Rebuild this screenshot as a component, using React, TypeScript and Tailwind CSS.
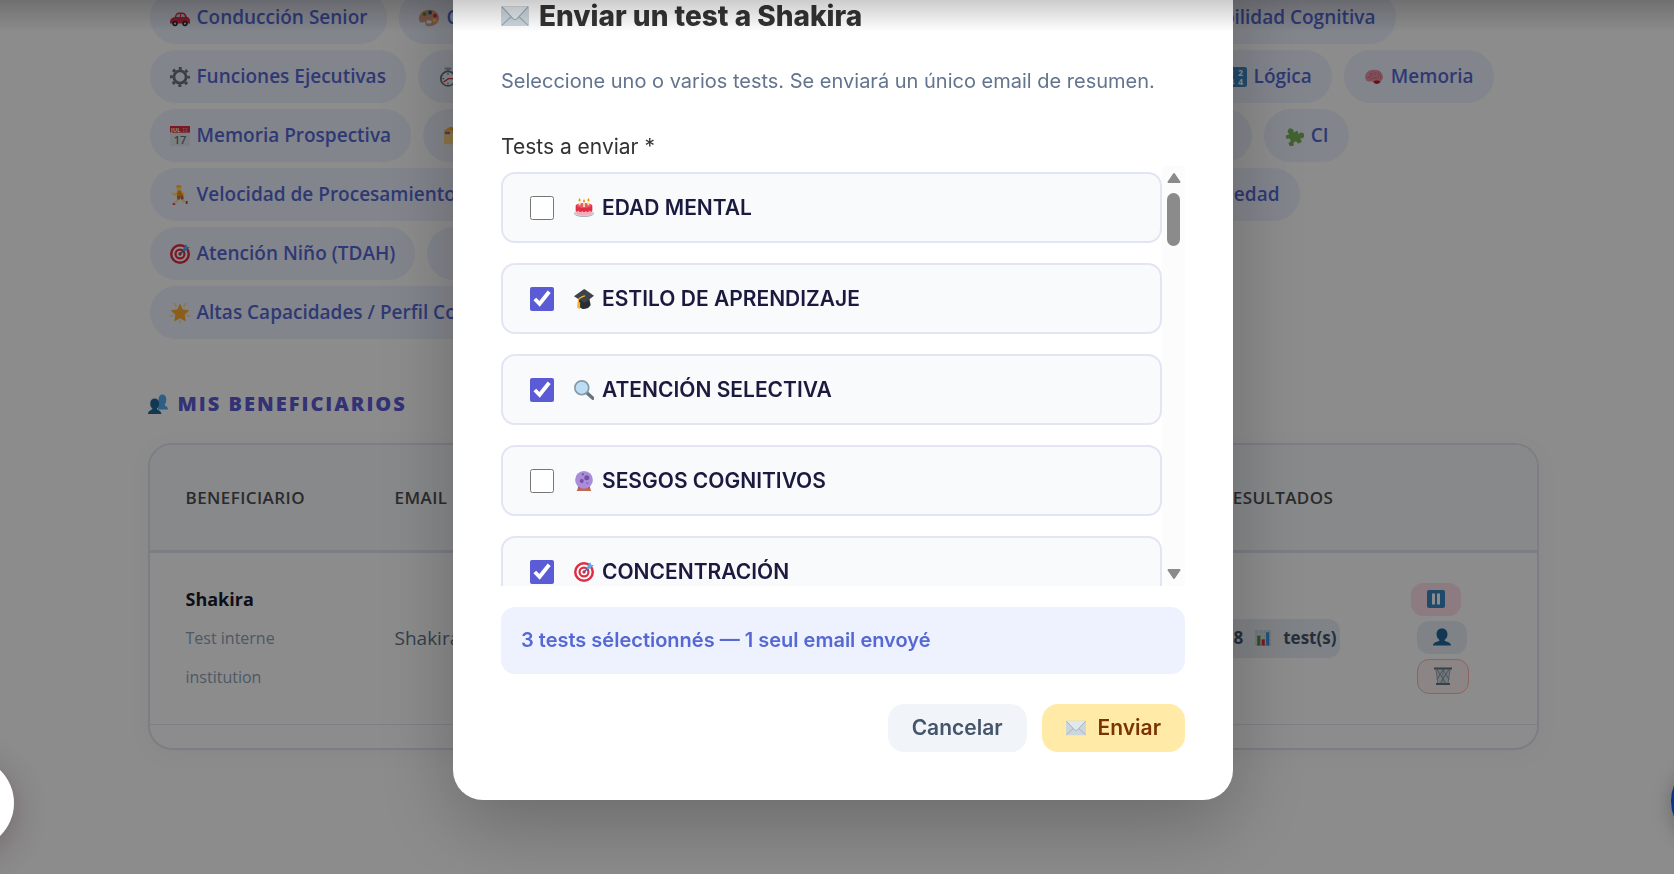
import React, { useState } from "react";

type IconName =
  | "car" | "palette" | "gear" | "stopwatch" | "calendar" | "folder" | "runner" | "target"
  | "star" | "people" | "numbers" | "brain" | "puzzle" | "cake" | "cap" | "magnifier"
  | "crystal" | "envelope" | "pause" | "person" | "trash" | "chart";

const drawings: Record<IconName, React.ReactNode> = {
  car: (
    <>
      <path d="M8 17c2-6 4-9 8-9h7c4 0 6 4 8 9z" fill="#dd2e44" />
      <path d="M11 16c1-3 2-5 5-5h2v5zM20 11h3c2 0 3 2 4 5h-7z" fill="#bbddf5" />
      <path d="M0 24c0-5 4-7 9-8h22c3 1 5 3 5 7v5H0z" fill="#dd2e44" />
      <circle cx="9" cy="28" r="5" fill="#292f33" />
      <circle cx="27" cy="28" r="5" fill="#292f33" />
      <circle cx="9" cy="28" r="2" fill="#ccd6dd" />
      <circle cx="27" cy="28" r="2" fill="#ccd6dd" />
    </>
  ),
  palette: (
    <>
      <path d="M18 3C8 3 0 10 0 19c0 4 1 7 4 7 3 1 5-2 7 0 2 3-1 7 6 7 11 0 19-6 19-15S28 3 18 3zm0 25c-3 0-5-1-5-3s2-3 5-3 5 1 5 3-2 3-5 3z" fill="#d99e82" fillRule="evenodd" />
      <circle cx="10" cy="11" r="3.500" fill="#5c913b" />
      <circle cx="20" cy="8" r="3.500" fill="#226699" />
      <circle cx="29" cy="14" r="3.500" fill="#dd2e44" />
      <circle cx="28" cy="22" r="3.500" fill="#ffcc4d" />
    </>
  ),
  gear: (
    <>
      <circle cx="18" cy="18" r="11" fill="none" stroke="#66757f" strokeWidth="5" />
      <circle cx="18" cy="18" r="15.500" fill="none" stroke="#66757f" strokeWidth="5" strokeDasharray="5.500 6.670" strokeDashoffset="2.700" />
    </>
  ),
  stopwatch: (
    <>
      <path d="M12 1h12v4h-4v4h-4V5h-4zM28 6l4 4-3 3-4-4z" fill="#99aab5" />
      <circle cx="18" cy="21" r="13" fill="#f5f8fa" stroke="#66757f" strokeWidth="3" />
      <path d="M18 11v3M18 28v3M8 21h3M25 21h3" stroke="#66757f" strokeWidth="2" />
      <path d="M10 27l9-6h7" stroke="#dd2e44" strokeWidth="2.500" fill="none" />
    </>
  ),
  calendar: (
    <>
      <rect y="4" width="36" height="32" rx="3" fill="#e1e8ed" />
      <path d="M0 0h36v12H0z" fill="#dd2e44" />
      <text x="2" y="10" fontSize="10" fontWeight="700" fill="#fff" fontFamily="Open Sans, sans-serif">JUL</text>
      <path d="M23 4h3v2h-3zM28 4h3v2h-3zM23 8h3v2h-3zM28 8h3v2h-3z" fill="#f4abba" />
      <text x="18" y="32" textAnchor="middle" fontSize="20" fontWeight="600" fill="#66757f" fontFamily="Open Sans, sans-serif">17</text>
    </>
  ),
  folder: (
    <>
      <path d="M2 8l10-6h22v30H2z" fill="#ffac33" />
      <path d="M4 8h12v4h18v21H2V10z" fill="#ffd983" />
      <path d="M17 4h10v3H17z" fill="#5c913b" />
      <rect x="3" y="10" width="10" height="5" rx="2" fill="#9266cc" />
    </>
  ),
  runner: (
    <>
      <circle cx="16" cy="5" r="4.500" fill="#ffdc5d" />
      <path d="M11 4c0-5 9-5 10 0l-5-1z" fill="#ffac33" />
      <path d="M13 10h8l4 12-8 2-5-3z" fill="#f4900c" />
      <path d="M13 12l-4 6-5-3M21 12l4 5" stroke="#ffdc5d" strokeWidth="3" fill="none" strokeLinecap="round" />
      <path d="M14 22l-1 6-6 6M20 22l4 8h7" stroke="#ffdc5d" strokeWidth="3" fill="none" />
      <path d="M16 20l-1 6M20 20l3 6" stroke="#c1694f" strokeWidth="5" />
      <path d="M5 33l4 3M30 29v5" stroke="#dd2e44" strokeWidth="3" />
    </>
  ),
  target: (
    <>
      <circle cx="18" cy="18" r="18" fill="#dd2e44" />
      <circle cx="18" cy="18" r="13.500" fill="#fff" />
      <circle cx="18" cy="18" r="10" fill="#dd2e44" />
      <circle cx="18" cy="18" r="6" fill="#fff" />
      <circle cx="18" cy="18" r="3" fill="#dd2e44" />
      <path d="M18 18L29 7" stroke="#269" strokeWidth="2.500" />
      <path d="M24 8l5-8 2 5 5 1-8 6-5 1z" fill="#55acee" />
    </>
  ),
  star: (
    <>
      <path d="M18 1l5 10.500 12 1.500-8.500 8.300 2 12.200L18 27.500 7.500 33.500l2-12.200L1 13l12-1.500z" fill="#ffac33" />
      <path d="M8 1l3 5M28 1l-3 5M0 24l5-1.500M36 24l-5-1.500M18 31v5" stroke="#ffd983" strokeWidth="2.500" strokeLinecap="round" />
    </>
  ),
  people: (
    <>
      <path d="M19 10c0-6 3-9 7-9s7 3 7 9c0 4-1 7-3 9 0 3 6 3 6 9H18z" fill="#55acee" />
      <path d="M4 17c0-6 4-9 8-9s8 3 8 9c0 4-1 7-4 9 0 3 8 3 8 10H0c0-7 8-7 8-10-3-2-4-5-4-9z" fill="#226699" />
    </>
  ),
  numbers: (
    <>
      <rect width="36" height="36" rx="4" fill="#3b88c3" />
      <text x="4" y="16" fontSize="16" fontWeight="700" fill="#fff" fontFamily="Open Sans, sans-serif">1</text>
      <text x="20" y="16" fontSize="16" fontWeight="700" fill="#fff" fontFamily="Open Sans, sans-serif">2</text>
      <text x="4" y="32" fontSize="16" fontWeight="700" fill="#fff" fontFamily="Open Sans, sans-serif">3</text>
      <text x="20" y="32" fontSize="16" fontWeight="700" fill="#fff" fontFamily="Open Sans, sans-serif">4</text>
    </>
  ),
  brain: (
    <>
      <path d="M3 22C0 14 6 5 17 5c10-1 17 5 17 13 0 5-3 8-7 9-7 2-9-1-14-1-5 1-9-1-10-4z" fill="#ea91a0" />
      <path d="M17 26c3-3 10-2 13 0-1 4-9 6-12 3z" fill="#be1931" />
      <path d="M7 20c2-4 5-2 7-5M10 12c3-2 6 1 5 3M18 8c3 2 0 5 4 6M26 10c-2 3 3 4 0 7M17 20c4-3 6 2 9-1M12 22c2-2 3-1 5-2M30 16c-1 3 1 4-1 6" stroke="#be5064" strokeWidth="1" fill="none" />
    </>
  ),
  puzzle: (
    <path
      transform="rotate(-22 18 18) translate(-4 -1) scale(1.15)"
      d="M7 11h7a4.500 4.500 0 1 1 6 0h7v6a4.500 4.500 0 1 1 0 6v7h-7a3.300 3.300 0 1 0-6 0H7v-7a3.300 3.300 0 1 0 0-6z"
      fill="#77b255"
    />
  ),
  cake: (
    <>
      <ellipse cx="18" cy="28" rx="18" ry="6" fill="#99aab5" />
      <ellipse cx="18" cy="27" rx="18" ry="6" fill="#ccd6dd" />
      <path d="M4 14h28v13c0 6-28 6-28 0z" fill="#f4abba" />
      <path d="M3 14c0-6 30-6 30 0v8c-1 4-4 3-5 0-1 4-6 4-7 1-1 3-5 3-6 0-1 3-6 3-7-1-1 3-5 3-5 0z" fill="#dd2e44" />
      <ellipse cx="18" cy="14" rx="13" ry="4" fill="#ea596e" />
      <path d="M10 6v7M18 8v8M26 6v7" stroke="#ffe8b6" strokeWidth="3" />
      <path d="M10 0c3 4 2 6 0 6s-3-2 0-6zM18 2c3 4 2 6 0 6s-3-2 0-6zM26 0c3 4 2 6 0 6s-3-2 0-6z" fill="#f4900c" />
    </>
  ),
  cap: (
    <>
      <path d="M9 15h18l3 14c-3 6-9 7-12 7s-7-2-10-6z" fill="#292f33" />
      <path d="M0 13L17 1c1-1 2-1 3 0l16 11-15 12c-1 1-3 1-4 0z" fill="#3e4347" />
      <path d="M20 12c-5 2-12 4-12 8v8" stroke="#ffac33" strokeWidth="2" fill="none" />
      <path d="M6 24h5v12l-5-2z" fill="#ffac33" />
    </>
  ),
  magnifier: (
    <>
      <path d="M22 22l12 11" stroke="#66757f" strokeWidth="6" strokeLinecap="round" />
      <circle cx="14" cy="14" r="12.500" fill="#bbddf5" stroke="#8899a6" strokeWidth="3" />
    </>
  ),
  crystal: (
    <>
      <path d="M8 28h20l3 8H5z" fill="#c1694f" />
      <path d="M8 28h20v3H8z" fill="#a0041e" opacity=".5" />
      <circle cx="18" cy="16" r="16" fill="#aa8dd8" />
      <circle cx="23" cy="12" r="4.500" fill="#7450a8" />
      <circle cx="14" cy="18" r="3.500" fill="#7450a8" />
      <circle cx="16" cy="6" r="2" fill="#7450a8" />
      <circle cx="24" cy="22" r="2" fill="#9266cc" />
    </>
  ),
  envelope: (
    <>
      <rect y="5" width="36" height="26" rx="2" fill="#ccd6dd" />
      <path d="M1 6h34L21 21c-2 2-4 2-6 0z" fill="#e1e8ed" />
      <path d="M1 30l12-11M35 30L23 19M1 6l14 15c2 2 4 2 6 0L35 6" stroke="#99aab5" strokeWidth="1.500" fill="none" />
    </>
  ),
  pause: (
    <>
      <rect width="36" height="36" rx="4" fill="#3b88c3" />
      <path d="M10 7h6v22h-6zM20 7h6v22h-6z" fill="#fff" />
    </>
  ),
  person: (
    <path d="M7 12C7 5 12 1 18 1s11 4 11 11c0 5-2 9-6 12 0 4 13 3 13 11H0c0-8 13-7 13-11-4-3-6-7-6-12z" fill="#226699" />
  ),
  trash: (
    <>
      <path d="M3 5h30l-4 28H7z" fill="#d5dde3" />
      <path d="M6 5l18 28M18 5l12 20M30 5L12 33M18 5L6 25" stroke="#8899a6" strokeWidth="2" />
      <path d="M4 5l4 28M32 5l-4 28M18 5v28" stroke="#8899a6" strokeWidth="1.500" />
      <path d="M0 1h36v4H0zM4 32h28v4H4z" fill="#66757f" />
    </>
  ),
  chart: (
    <>
      <rect width="36" height="36" rx="3" fill="#ccd6dd" />
      <path d="M0 9h36M0 18h36M0 27h36M9 0v36M18 0v36M27 0v36" stroke="#e1e8ed" strokeWidth="2" />
      <path d="M5 13h7v22H5z" fill="#5c913b" />
      <path d="M15 21h7v14h-7z" fill="#dd2e44" />
      <path d="M25 5h7v30h-7z" fill="#3b94d9" />
    </>
  ),
};

const Icon = ({ name, className = "size-5" }: { name: IconName; className?: string }) => (
  <svg viewBox="0 0 36 36" className={`shrink-0 ${className}`} aria-hidden>
    {drawings[name]}
  </svg>
);

interface Tag {
  icon: IconName;
  label?: string;
  grow?: boolean;
}

const tagRows: { width: string; tags: Tag[] }[] = [
  {
    width: "max-w-[1246px]",
    tags: [
      { icon: "car", label: "Conducción Senior" },
      { icon: "palette", label: "Color", grow: true },
      { icon: "brain", label: "Flexibilidad Cognitiva" },
    ],
  },
  {
    width: "max-w-[1344px]",
    tags: [
      { icon: "gear", label: "Funciones Ejecutivas" },
      { icon: "stopwatch", grow: true },
      { icon: "numbers", label: "Lógica" },
      { icon: "brain", label: "Memoria" },
    ],
  },
  {
    width: "max-w-[1199px]",
    tags: [
      { icon: "calendar", label: "Memoria Prospectiva" },
      { icon: "folder", grow: true },
      { icon: "puzzle", label: "CI" },
    ],
  },
  {
    width: "max-w-[1150px]",
    tags: [
      { icon: "runner", label: "Velocidad de Procesamiento" },
      { icon: "star", grow: true },
      { icon: "brain", label: "Ansiedad" },
    ],
  },
  {
    width: "max-w-[900px]",
    tags: [{ icon: "target", label: "Atención Niño (TDAH)" }],
  },
  {
    width: "max-w-[900px]",
    tags: [{ icon: "star", label: "Altas Capacidades / Perfil Cognitivo" }],
  },
];

const tests: { id: string; icon: IconName; label: string }[] = [
  { id: "edad", icon: "cake", label: "EDAD MENTAL" },
  { id: "estilo", icon: "cap", label: "ESTILO DE APRENDIZAJE" },
  { id: "atencion", icon: "magnifier", label: "ATENCIÓN SELECTIVA" },
  { id: "sesgos", icon: "crystal", label: "SESGOS COGNITIVOS" },
  { id: "concentracion", icon: "target", label: "CONCENTRACIÓN" },
];

const TagCloud = () => (
  <div className="flex flex-col gap-1.5 pl-0.5">
    {tagRows.map((row, i) => (
      <div key={i} className={`flex gap-3 ${row.width}`}>
        {row.tags.map((tag) => (
          <span
            key={tag.icon}
            className={`flex h-[53px] items-center gap-[7px] rounded-full bg-[#eef2ff] px-5 text-[19px] font-semibold whitespace-nowrap text-[#5568d3] ${
              tag.grow ? "flex-1" : ""
            }`}
          >
            <Icon name={tag.icon} />
            {tag.label}
          </span>
        ))}
        {row.tags.length === 1 && i === 4 && <span className="h-[53px] flex-1 rounded-full bg-[#eef2ff]" />}
      </div>
    ))}
  </div>
);

const Beneficiaries = () => (
  <section className="mt-[49px]">
    <h2 className="flex items-center gap-2.5 text-xl leading-8 font-extrabold tracking-widest text-[#5b5bd6]">
      <Icon name="people" />
      MIS BENEFICIARIOS
    </h2>
    <div className="mt-[23px] overflow-hidden rounded-3xl border-2 border-[#e2e5f0] pb-[23px] shadow-[0_4px_24px_rgba(0,0,0,0.04)]">
      <table className="w-full table-fixed border-collapse text-left">
        <thead className="border-b-3 border-[#e2e5f0] bg-slate-50 text-[17px] tracking-wide text-[#4f4f4f]">
          <tr className="h-[106px]">
            <th className="w-[209px] px-9 font-semibold">BENEFICIARIO</th>
            <th className="px-9 font-semibold">EMAIL</th>
            <th className="w-[189px] pl-9 font-semibold">RESULTADOS</th>
            <th className="w-[162px]" aria-label="Acciones" />
          </tr>
        </thead>
        <tbody>
          <tr className="border-b border-slate-200">
            <td className="py-[27px] pl-9">
              <strong className="block text-lg leading-[39px] font-bold text-[#1a1a2e]">Shakira</strong>
              <span className="block max-w-[110px] text-base leading-[39px] text-slate-400">
                Test interne institution
              </span>
            </td>
            <td className="px-9 text-[19px] text-slate-500">Shakira</td>
            <td className="pl-9">
              <span className="inline-flex h-[39px] items-center gap-3 rounded-xl bg-[#e8edf4] pr-1 pl-3 text-[17px] font-bold text-slate-600">
                8 <Icon name="chart" className="size-4" /> test(s)
              </span>
            </td>
            <td className="pl-9">
              <div className="flex flex-col items-start gap-[5px]">
                <button
                  aria-label="Pausar"
                  className="flex h-[33px] items-center rounded-xl bg-[#ffe1e9] px-4"
                >
                  <Icon name="pause" className="size-[18px]" />
                </button>
                <button
                  aria-label="Perfil"
                  className="ml-1.5 flex h-[33px] items-center rounded-xl bg-[#e8eff7] px-4"
                >
                  <Icon name="person" className="size-[18px]" />
                </button>
                <button
                  aria-label="Eliminar"
                  className="ml-1.5 flex h-[35px] items-center rounded-xl border border-[#fcb5b5] bg-red-50 px-4"
                >
                  <Icon name="trash" className="size-[18px]" />
                </button>
              </div>
            </td>
          </tr>
        </tbody>
      </table>
    </div>
  </section>
);

const Scrollbar = () => (
  <div className="flex w-[23px] flex-col items-center bg-[#fcfcfc] py-1.5" aria-hidden>
    <svg viewBox="0 0 16 12" className="h-3 w-4">
      <path d="M8 2l5.500 8h-11z" fill="#8b8b8b" stroke="#8b8b8b" strokeWidth="2" strokeLinejoin="round" />
    </svg>
    <div className="mt-[9px] h-[53px] w-[13px] rounded-full bg-[#8b8b8b]" />
    <svg viewBox="0 0 16 12" className="mt-auto h-3 w-4">
      <path d="M8 10L2.500 2h11z" fill="#8b8b8b" stroke="#8b8b8b" strokeWidth="2" strokeLinejoin="round" />
    </svg>
  </div>
);

const SendTestModal = () => {
  const [selected, setSelected] = useState(["estilo", "atencion", "concentracion"]);

  const toggle = (id: string) =>
    setSelected((prev) => (prev.includes(id) ? prev.filter((x) => x !== id) : [...prev, id]));

  return (
    <div
      role="dialog"
      aria-modal="true"
      aria-labelledby="modal-title"
      className="w-full max-w-[780px] shrink-0 rounded-[30px] bg-white p-12 font-[Inter,sans-serif] shadow-[0_24px_80px_rgba(0,0,0,0.25)]"
    >
      <h2 id="modal-title" className="flex items-center gap-2.5 text-[28px] leading-9 font-extrabold text-[#333]">
        <Icon name="envelope" className="size-7" />
        Enviar un test a Shakira
      </h2>
      <p className="mt-[30px] text-xl leading-[34px] whitespace-nowrap text-slate-500">
        Seleccione uno o varios tests. Se enviará un único email de resumen.
      </p>

      <fieldset className="mt-8">
        <legend className="text-[21px] leading-[34px] text-[#333]">Tests a enviar *</legend>
        <div className="mt-0.5 flex h-[420px] overflow-hidden">
          <div className="flex flex-1 flex-col gap-5 pt-1.5">
            {tests.map((test) => (
              <label
                key={test.id}
                className="flex h-[71px] shrink-0 items-center rounded-[14px] border-2 border-[#e4e4f7] bg-slate-50 px-[27px] text-[21px] font-semibold text-[#1a1a3e]"
              >
                <input
                  type="checkbox"
                  checked={selected.includes(test.id)}
                  onChange={() => toggle(test.id)}
                  className="mr-5 size-6 accent-[#5b5bd6]"
                />
                <Icon name={test.icon} className="mr-2 size-5" />
                {test.label}
              </label>
            ))}
          </div>
          <Scrollbar />
        </div>
      </fieldset>

      <p className="mt-[21px] rounded-[14px] bg-[#eef2ff] px-5 py-4 text-xl leading-[35px] font-semibold text-[#5568d3]">
        {selected.length} tests sélectionnés — 1 seul email envoyé
      </p>

      <div className="mt-[30px] flex justify-end gap-[15px] text-[21px] font-semibold">
        <button className="h-12 rounded-2xl bg-slate-100 px-6 text-slate-600">Cancelar</button>
        <button className="flex h-12 items-center gap-3 rounded-2xl bg-[#ffeaa7] px-6 text-amber-900">
          <Icon name="envelope" />
          Enviar
        </button>
      </div>
    </div>
  );
};

export default function App() {
  return (
    <div className="relative h-screen overflow-hidden bg-white pl-3 font-['Open_Sans',sans-serif]">
      <main className="mx-auto -mt-[9px] max-w-[1391px]">
        <TagCloud />
        <Beneficiaries />
      </main>

      <button
        aria-label="Chat"
        className="fixed -right-[85px] bottom-[29px] size-22 rounded-full bg-blue-600 shadow-[0_4px_20px_rgba(0,0,0,0.25)]"
      />

      <div className="fixed inset-0 flex items-end justify-center bg-black/45 pb-[74px] pl-3">
        <SendTestModal />
      </div>

      <button
        aria-label="Accesibilidad"
        className="fixed bottom-[25px] -left-[78px] size-[92px] rounded-full bg-white shadow-[0_8px_32px_rgba(60,20,40,0.3)]"
      />
      <div className="pointer-events-none fixed inset-x-0 top-0 h-8 bg-linear-to-b from-black/20 to-transparent" />
    </div>
  );
}
